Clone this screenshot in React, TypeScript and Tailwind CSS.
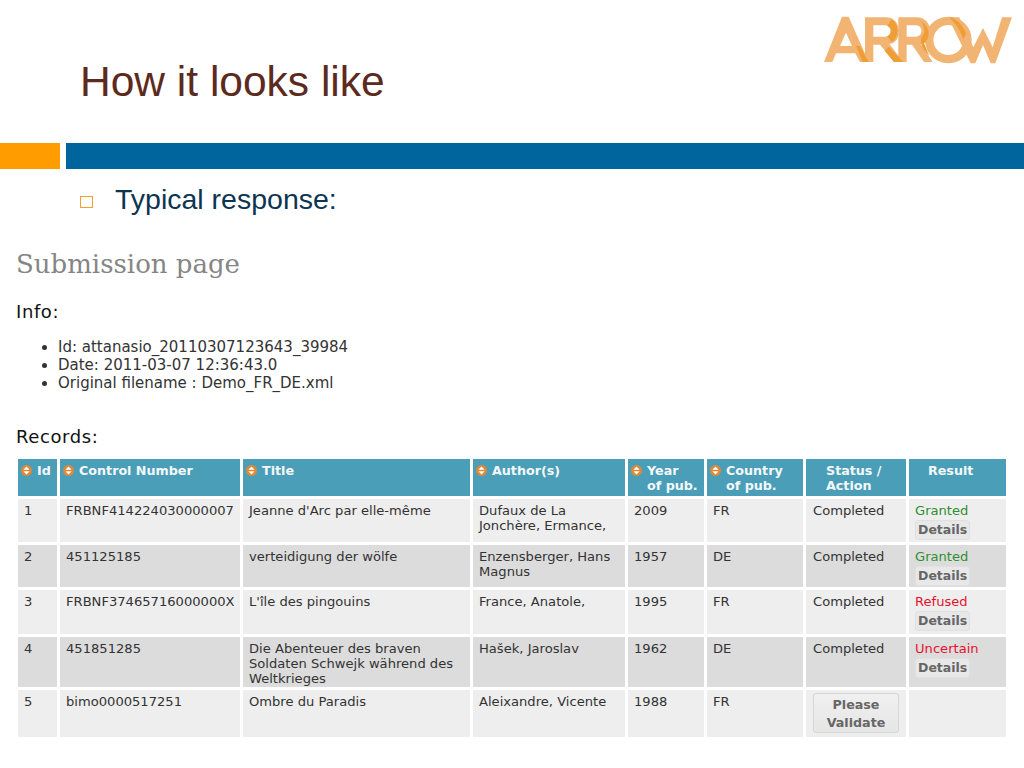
const rows = [
  { id: '1', control: 'FRBNF414224030000007', title: "Jeanne d'Arc par elle-même", author: 'Dufaux de La Jonchère, Ermance,', year: '2009', country: 'FR', result: 'Granted', height: 'h-[43px]' },
  { id: '2', control: '451125185', title: 'verteidigung der wölfe', author: 'Enzensberger, Hans Magnus', year: '1957', country: 'DE', result: 'Granted', height: 'h-[42px]' },
  { id: '3', control: 'FRBNF37465716000000X', title: "L'île des pingouins", author: 'France, Anatole,', year: '1995', country: 'FR', result: 'Refused', height: 'h-[44px]' },
  { id: '4', control: '451851285', title: 'Die Abenteuer des braven Soldaten Schwejk während des Weltkrieges', author: 'Hašek, Jaroslav', year: '1962', country: 'DE', result: 'Uncertain', height: 'h-[50px]' },
  { id: '5', control: 'bimo0000517251', title: 'Ombre du Paradis', author: 'Aleixandre, Vicente', year: '1988', country: 'FR', result: '', height: 'h-[47px]' },
]

const resultColors: Record<string, string> = {
  Granted: 'text-[#2f8f2f]',
  Refused: 'text-[#e8112d]',
  Uncertain: 'text-[#e8112d]',
}

function SortIcon() {
  return (
    <svg width="11" height="11" viewBox="0 0 11 11" className="inline-block mr-[5px] align-[-1px]" aria-hidden="true">
      <circle cx="5.5" cy="5.5" r="5.5" fill="#dc8a38" />
      <path d="M5.5 1.6L8.6 4.7H2.4zM5.5 9.4L2.4 6.3H8.6z" fill="#fff" />
    </svg>
  )
}

function ArrowLogo() {
  return (
    <svg width="224" height="80" viewBox="0 0 672 240" aria-label="ARROW logo">
      <g fill="#f2b473">
        <path fillRule="evenodd" d="M72 186L126 50H146L206 186H180L166 160H108L97 186zM120 138H156L138 98z" />
        <path fillRule="evenodd" d="M195 52H258C308 52 308 130 268 132L310 186H282L240 134H220V186H195zM220 76V110H256C276 110 276 76 256 76z" />
        <path fillRule="evenodd" d="M295 52H350C402 52 402 130 362 132L398 186H372L336 134H320V186H295zM320 76V110H348C370 110 370 76 348 76z" />
        <path fillRule="evenodd" d="M445 50A70 70 0 1 1 444.9 50zM445 75A45 45 0 1 0 445.1 75z" />
        <path d="M444 52H478L520 142L549 84L578 142L606 52H636L586 190H572L549 135L526 190H512z" />
      </g>
      <g fill="#ee9e35">
        <path d="M168 138H180L206 186H188z" />
        <path d="M275 58C298 72 298 112 276 126L262 110C278 100 278 84 262 78z" />
        <path d="M282 186L254 152L266 140L310 186z" />
        <path d="M362 62C392 82 392 114 372 130L388 168C360 140 356 120 372 100C376 88 370 74 362 62z" />
        <path d="M448 52C470 56 486 72 498 100L490 118C480 90 468 70 450 56z" />
      </g>
    </svg>
  )
}

export default function App() {
  return (
    <div className="w-[1024px] h-[768px] bg-white overflow-hidden font-['Liberation_Sans',sans-serif]">
      <div className="flex justify-between h-[143px]">
        <h1 className="pl-[80px] pt-[56px] text-[42.5px] leading-[52px] text-[#5c2a1e]">How it looks like</h1>
        <ArrowLogo />
      </div>

      <div className="flex gap-[6px] h-[26px]">
        <div className="w-[60px] bg-[#ff9c00]" />
        <div className="flex-1 bg-[#00659c]" />
      </div>

      <div className="flex items-center pl-[80px] mt-[14px] h-[32px]">
        <span className="w-[13px] h-[12px] border border-[#f0a030] mt-[6px]" />
        <span className="ml-[22px] text-[28.5px] leading-[32px] text-[#0d3552]">Typical response:</span>
      </div>

      <div className="pl-[16px] mt-[31px] font-['DejaVu_Sans',sans-serif]">
        <h2 className="font-['DejaVu_Serif',serif] text-[26px] leading-[36px] text-[#858585]">Submission page</h2>
        <h3 className="mt-[18px] text-[18px] tracking-[0.6px] leading-[24px] text-[#111]">Info:</h3>
        <ul className="mt-[14px] pl-[42px] list-disc text-[15px] leading-[18px] text-[#333]">
          <li>Id: attanasio_20110307123643_39984</li>
          <li>Date: 2011-03-07 12:36:43.0</li>
          <li>Original filename : Demo_FR_DE.xml</li>
        </ul>
        <h3 className="mt-[33px] text-[18px] tracking-[0.6px] leading-[24px] text-[#111]">Records:</h3>
      </div>

      <table className="ml-[15px] mt-[7px] border-separate border-spacing-[3px] table-fixed w-[993px] font-['DejaVu_Sans',sans-serif] text-[13.1px] leading-[15px] text-[#333]">
        <colgroup>
          <col className="w-[39px]" />
          <col className="w-[180px]" />
          <col className="w-[227px]" />
          <col className="w-[152px]" />
          <col className="w-[76px]" />
          <col className="w-[96px]" />
          <col className="w-[100px]" />
          <col className="w-[97px]" />
        </colgroup>
        <thead>
          <tr className="h-[37px] bg-[#4a9eb8] text-[#f4f8fa] text-[12.7px]">
            <th className="align-top text-left pl-[3px] pt-[4px] font-bold"><SortIcon />Id</th>
            <th className="align-top text-left pl-[3px] pt-[4px] font-bold"><SortIcon />Control Number</th>
            <th className="align-top text-left pl-[3px] pt-[4px] font-bold"><SortIcon />Title</th>
            <th className="align-top text-left pl-[3px] pt-[4px] font-bold"><SortIcon />Author(s)</th>
            <th className="align-top text-left pl-[3px] pt-[4px] font-bold"><SortIcon />Year<br /><span className="pl-[16px]">of pub.</span></th>
            <th className="align-top text-left pl-[3px] pt-[4px] font-bold"><SortIcon />Country<br /><span className="pl-[16px]">of pub.</span></th>
            <th className="align-top text-left pl-[20px] pt-[4px] font-bold">Status /<br />Action</th>
            <th className="align-top text-left pl-[19px] pt-[4px] font-bold">Result</th>
          </tr>
        </thead>
        <tbody>
          {rows.map((row, i) => (
            <tr key={row.id} className={`${row.height} ${i % 2 === 0 ? 'bg-[#eeeeee]' : 'bg-[#dcdcdc]'}`}>
              <td className="align-top pl-[6px] pt-[4px]">{row.id}</td>
              <td className="align-top pl-[6px] pt-[4px] whitespace-nowrap">{row.control}</td>
              <td className="align-top pl-[6px] pr-[4px] pt-[4px]">{row.title}</td>
              <td className="align-top pl-[6px] pr-[4px] pt-[4px]">{row.author}</td>
              <td className="align-top pl-[6px] pt-[4px]">{row.year}</td>
              <td className="align-top pl-[6px] pt-[4px]">{row.country}</td>
              <td className="align-top pl-[7px] pt-[4px]">
                {row.result ? (
                  'Completed'
                ) : (
                  <button className="w-[86px] h-[40px] -mt-[1px] pt-[2px] rounded-[3px] border border-[#d6d6d6] bg-linear-to-b from-[#f0f0f0] to-[#e6e6e6] font-bold text-[#666] text-[12.7px] leading-[18px]">
                    Please<br />Validate
                  </button>
                )}
              </td>
              <td className="align-top pl-[6px] pt-[4px]">
                {row.result && (
                  <>
                    <div className={resultColors[row.result]}>{row.result}</div>
                    <button className="mt-[2px] px-[2px] py-[1px] rounded-[3px] border border-[#e0e0e0] bg-[#e8e8e8] font-bold text-[#666] text-[12.5px] leading-[16px]">Details</button>
                  </>
                )}
              </td>
            </tr>
          ))}
        </tbody>
      </table>
    </div>
  )
}
